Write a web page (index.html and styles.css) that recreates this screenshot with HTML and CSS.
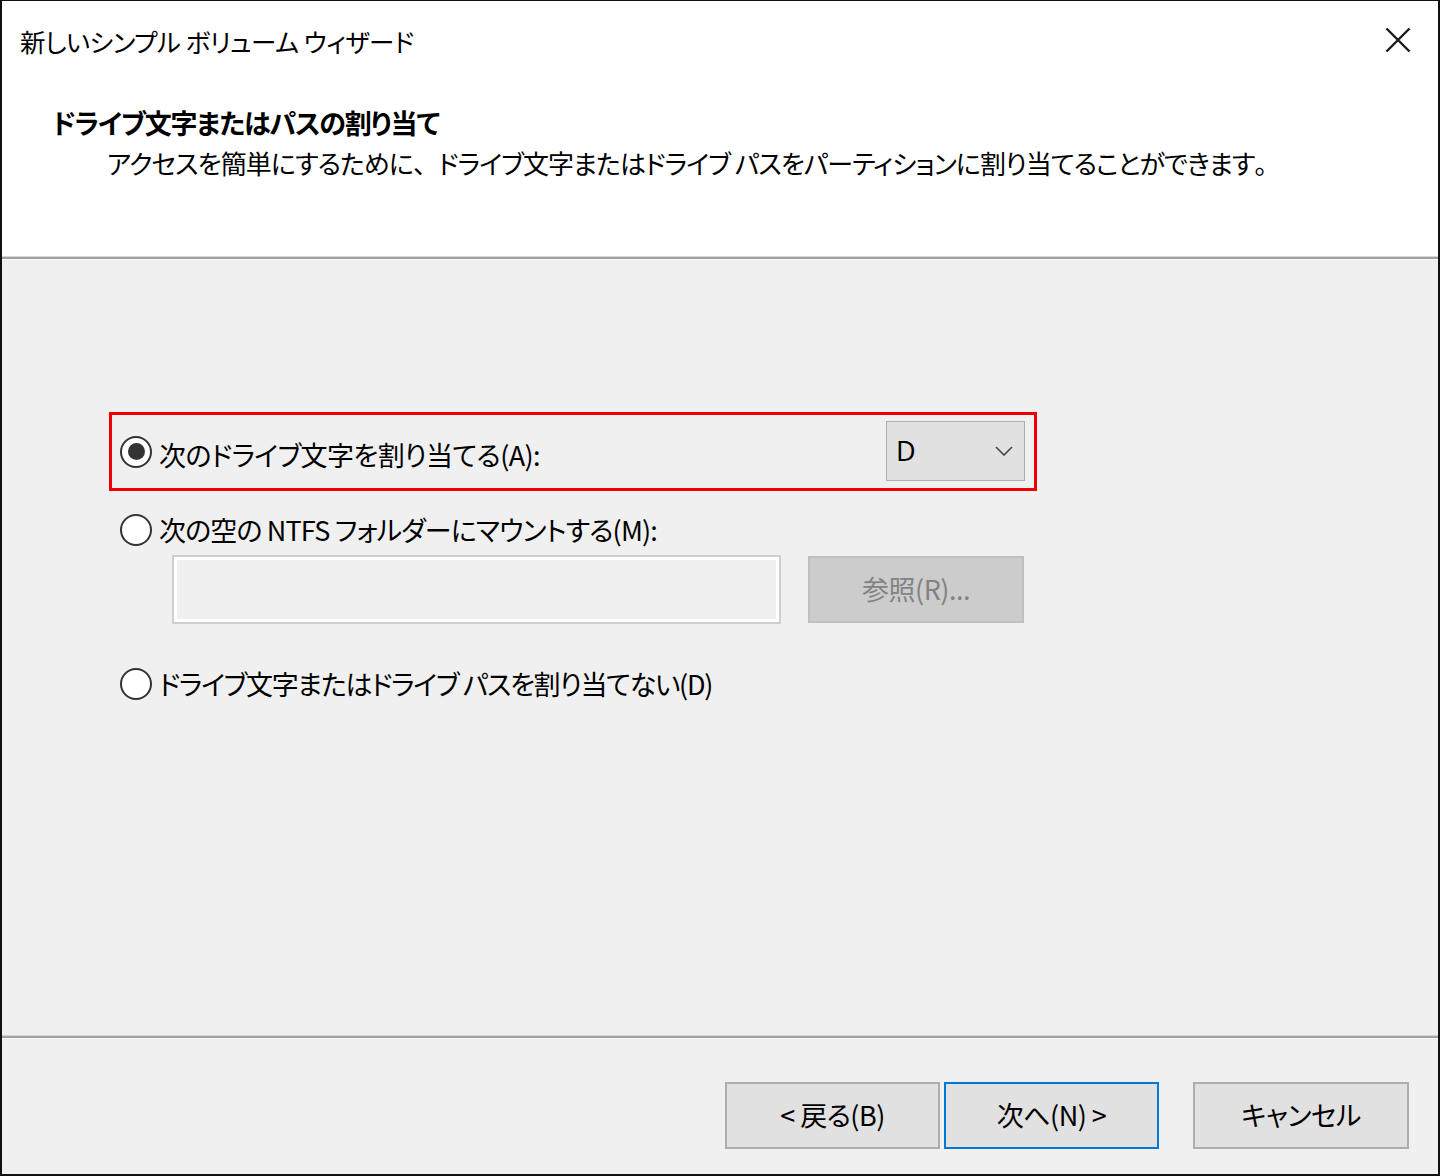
FILE: index.html
```html
<!DOCTYPE html>
<html lang="ja">
<head>
<meta charset="utf-8">
<title>新しいシンプル ボリューム ウィザード</title>
<link rel="stylesheet" href="styles.css">
</head>
<body>
<div class="window">
  <header class="header">
    <div class="titlebar">
      <div class="title">新しいシンプル ボリューム ウィザード</div>
      <div class="close" aria-label="閉じる">
        <svg width="26" height="26" viewBox="0 0 26 26"><path d="M1.5 1.5 L24.5 24.5 M24.5 1.5 L1.5 24.5" stroke="#1a1a1a" stroke-width="2.4" fill="none"/></svg>
      </div>
    </div>
    <div class="heading">ドライブ文字またはパスの割り当て</div>
    <div class="subheading">アクセスを簡単にするために<span class="fw">、</span>ドライブ文字またはドライブ パスをパーティションに割り当てることができます<span class="fw">。</span></div>
  </header>
  <div class="sep"></div>
  <main class="content">
    <div class="highlight">
      <div class="option">
        <span class="radio checked"></span>
        <span class="label l1">次のドライブ文字を割り当てる(A):</span>
      </div>
      <div class="select">
        <span class="select-value">D</span>
        <svg class="chevron" width="18" height="10" viewBox="0 0 18 10"><path d="M1 1 L9 9 L17 1" stroke="#444" stroke-width="1.6" fill="none"/></svg>
      </div>
    </div>
    <div class="option option2">
      <span class="radio"></span>
      <span class="label l2">次の空の NTFS フォルダーにマウントする(M):</span>
    </div>
    <div class="path-row">
      <div class="textbox"></div>
      <div class="btn disabled">参照(R)...</div>
    </div>
    <div class="option option3">
      <span class="radio"></span>
      <span class="label l3">ドライブ文字またはドライブ パスを割り当てない(D)</span>
    </div>
  </main>
  <div class="sep"></div>
  <footer class="footer">
    <div class="btn">&lt;&nbsp;戻る(B)</div>
    <div class="btn primary">次へ(N)&nbsp;&gt;</div>
    <div class="btn cancel">キャンセル</div>
  </footer>
</div>
</body>
</html>
```
FILE: styles.css
```css
* { box-sizing: border-box; }
html, body { margin: 0; padding: 0; background: #fff; }
body {
  font-family: "Noto Sans CJK JP", "Noto Sans", sans-serif;
  font-feature-settings: "palt";
  color: #000;
}
.window {
  width: 1440px;
  height: 1176px;
  border: 2px solid #111;
  border-top-width: 1px;
  display: flex;
  flex-direction: column;
  background: #f0f0f0;
}
.header {
  background: #fff;
  height: 255px;
  flex: none;
}
.titlebar {
  display: flex;
  justify-content: space-between;
  align-items: flex-start;
  padding: 22px 27px 0 18px;
}
.title {
  font-size: 25.5px;
  line-height: 36px;
  letter-spacing: -0.5px;
}
.close { padding-top: 4px; line-height: 0; }
.heading {
  margin: 46px 0 0 50px;
  font-size: 27px;
  font-weight: 700;
  line-height: 36px;
  letter-spacing: -1.2px;
}
.subheading {
  margin: 4px 0 0 105px;
  font-size: 26px;
  line-height: 36px;
  letter-spacing: -0.95px;
}
.fw { font-feature-settings: normal; }
.sep {
  flex: none;
  height: 4px;
  border-top: 1px solid #d8d8d8;
  border-bottom: 1px solid #fafafa;
  background: #a0a0a0;
}
.content {
  flex: 1;
  padding: 152px 0 0 107px;
}
.highlight {
  width: 928px;
  height: 79px;
  border: 3px solid #ee0000;
  display: flex;
  align-items: center;
  justify-content: space-between;
  padding: 0 9px 0 8px;
}
.option {
  display: flex;
  align-items: center;
  gap: 7px;
}
.label {
  font-size: 27px;
  line-height: 36px;
  white-space: nowrap;
}
.l1 { letter-spacing: -0.6px; padding-top: 7px; }
.l2 { letter-spacing: -0.85px; }
.l3 { letter-spacing: -1.3px; }
.radio {
  width: 32px;
  height: 32px;
  border-radius: 50%;
  border: 2.5px solid #333;
  background: #fff;
  display: flex;
  align-items: center;
  justify-content: center;
  flex: none;
}
.radio.checked::after {
  content: "";
  width: 17px;
  height: 17px;
  border-radius: 50%;
  background: #333;
}
.select {
  width: 139px;
  height: 60px;
  background: #e1e1e1;
  border: 1.5px solid #adadad;
  display: flex;
  align-items: center;
  justify-content: space-between;
  padding: 0 10px 0 9px;
  margin-top: -1px;
}
.select-value {
  font-family: "Noto Sans", sans-serif;
  font-size: 27px;
  line-height: 36px;
}
.chevron { margin-right: 1px; }
.option2 { margin: 21px 0 0 11px; }
.path-row {
  display: flex;
  gap: 27px;
  margin: 7px 0 0 63px;
}
.textbox {
  width: 609px;
  height: 69px;
  border: 2px solid #cfcfcf;
  box-shadow: inset 0 0 0 3px #fff;
  background: #f0f0f0;
}
.btn {
  width: 215px;
  height: 67px;
  background: #e1e1e1;
  border: 2px solid #adadad;
  display: flex;
  align-items: center;
  justify-content: center;
  font-size: 27px;
  line-height: 36px;
  padding-bottom: 2px;
  flex: none;
  letter-spacing: -0.5px;
}
.btn.disabled {
  width: 216px;
  background: #cccccc;
  border-color: #bfbfbf;
  color: #838383;
  margin-top: 1px;
}
.option3 { margin: 42px 0 0 11px; }
.footer {
  flex: none;
  height: 135px;
  display: flex;
  justify-content: flex-end;
  gap: 4px;
  padding: 43px 29px 0 0;
}
.btn.primary {
  border: 2px solid #0078d7;
}
.btn.cancel { width: 216px; margin-left: 30px; }
```
